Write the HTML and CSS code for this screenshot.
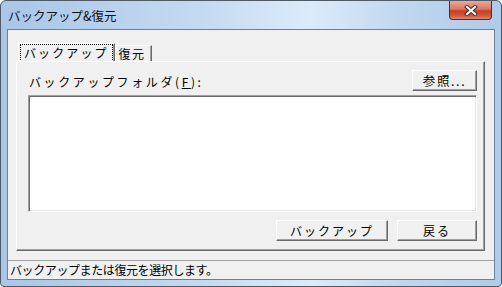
FILE: index.html
```html
<!DOCTYPE html>
<html>
<head>
  <meta charset="utf-8">
  <title>バックアップ&amp;復元</title>
  <link rel="stylesheet" href="styles.css">
</head>
<body>
  <div class="window">
    <div class="titlebar">
      <span class="title">バックアップ&amp;復元</span>
      <div class="close">
        <svg width="14" height="11" viewBox="0 0 14 11">
          <path d="M3 2 L11 9 M11 2 L3 9" stroke="#4a2a28" stroke-width="4" stroke-linecap="square"/>
          <path d="M3 2 L11 9 M11 2 L3 9" stroke="#fff" stroke-width="2" stroke-linecap="square"/>
        </svg>
      </div>
    </div>
    <div class="client">
      <div class="tabstrip">
        <div class="tab active"><span class="focus">バックアップ</span></div>
        <div class="tab">復元</div>
      </div>
      <div class="panel">
        <div class="row">
          <span class="label">バックアップフォルダ(<u>F</u>):</span>
          <button class="btn browse">参照...</button>
        </div>
        <div class="listbox"></div>
        <div class="actions">
          <button class="btn wide">バックアップ</button>
          <button class="btn back">戻る</button>
        </div>
      </div>
      <div class="status">バックアップまたは復元を選択します。</div>
    </div>
  </div>
</body>
</html>
```

FILE: styles.css
```css
html, body {
  margin: 0;
  padding: 0;
  background: #ffffff;
}
body {
  font-family: "Noto Sans CJK JP", "DejaVu Sans", sans-serif;
  font-size: 12px;
  color: #000;
}
.window {
  width: 502px;
  height: 287px;
  box-sizing: border-box;
  border: 1px solid #4e5a66;
  border-radius: 6px 6px 4px 4px;
  background: linear-gradient(90deg, #a9c6e8 0%, #c4daf1 40%, #dcebfa 62%, #c0d7ef 80%, #aecbea 100%);
  padding: 0 6px 6px 6px;
  display: flex;
  flex-direction: column;
}
.titlebar {
  height: 28px;
  display: flex;
  align-items: flex-start;
  justify-content: space-between;
}
.title {
  margin-top: 6px;
  margin-left: 1px;
  line-height: 17px;
  font-size: 12.5px;
  color: #111;
}
.close {
  width: 43px;
  height: 19px;
  margin-right: 3px;
  box-sizing: border-box;
  border: 1px solid #5a2a24;
  border-top: none;
  border-radius: 0 0 4px 4px;
  background: linear-gradient(180deg, #e9a99b 0%, #d87864 45%, #c23f25 55%, #d45d45 85%, #e48a6e 100%);
  display: flex;
  align-items: center;
  justify-content: center;
}
.client {
  flex: 1;
  border: 1px solid #6d7f92;
  background: #f0f0f0;
  display: flex;
  flex-direction: column;
  padding: 13px 9px 0 8px;
}
.tabstrip {
  display: flex;
  align-items: flex-end;
  height: 18px;
  padding-left: 2px;
}
.tab {
  height: 16px;
  box-sizing: border-box;
  padding: 0 5px 0 3px;
  line-height: 15px;
  border-left: 1px solid #fff;
  border-top: 1px solid #fff;
  border-right: 1px solid #696969;
  box-shadow: inset -1px 0 #a0a0a0;
  letter-spacing: 1.5px;
}
.tab.active {
  height: 18px;
  padding: 0 1px 0 1px;
  line-height: 17px;
}
.focus {
  display: block;
  height: 16px;
  line-height: 15px;
  padding: 0 3px 0 3px;
  border: 1px dotted #000;
  letter-spacing: 2.1px;
}
.panel {
  height: 190px;
  box-sizing: border-box;
  border-left: 1px solid #fff;
  border-top: 1px solid #fff;
  border-right: 1px solid #696969;
  border-bottom: 1px solid #696969;
  box-shadow: inset -1px -1px #a0a0a0;
  padding: 8px 7px 0 11px;
  display: flex;
  flex-direction: column;
}
.row {
  display: flex;
  justify-content: space-between;
  align-items: center;
  height: 21px;
}
.label {
  margin-left: 1px;
  margin-top: 2px;
  letter-spacing: 2.6px;
}
.btn {
  font-family: inherit;
  font-size: 12px;
  color: #000;
  background: #f0f0f0;
  border: 1px solid;
  border-color: #fff #696969 #696969 #fff;
  box-shadow: inset -1px -1px #a0a0a0;
  padding: 0;
  margin: 0;
  height: 21px;
  line-height: 18px;
}
.browse {
  width: 65px;
  letter-spacing: 1.6px;
  font-size: 12.5px;
}
.listbox {
  margin-top: 4px;
  height: 117px;
  box-sizing: border-box;
  background: #fff;
  border: 1px solid;
  border-color: #a0a0a0 #fff #fff #a0a0a0;
  box-shadow: inset 1px 1px #696969, inset -1px -1px #e3e3e3;
}
.actions {
  margin-top: 8px;
  display: flex;
  justify-content: flex-end;
  gap: 9px;
}
.wide {
  width: 112px;
  letter-spacing: 2px;
}
.back {
  width: 80px;
  letter-spacing: 2px;
}
.status {
  margin: 9px -9px 0 -8px;
  flex: 1;
  border-top: 1px solid #a0a0a0;
  padding-left: 2px;
  line-height: 17px;
  letter-spacing: -0.4px;
}
```
